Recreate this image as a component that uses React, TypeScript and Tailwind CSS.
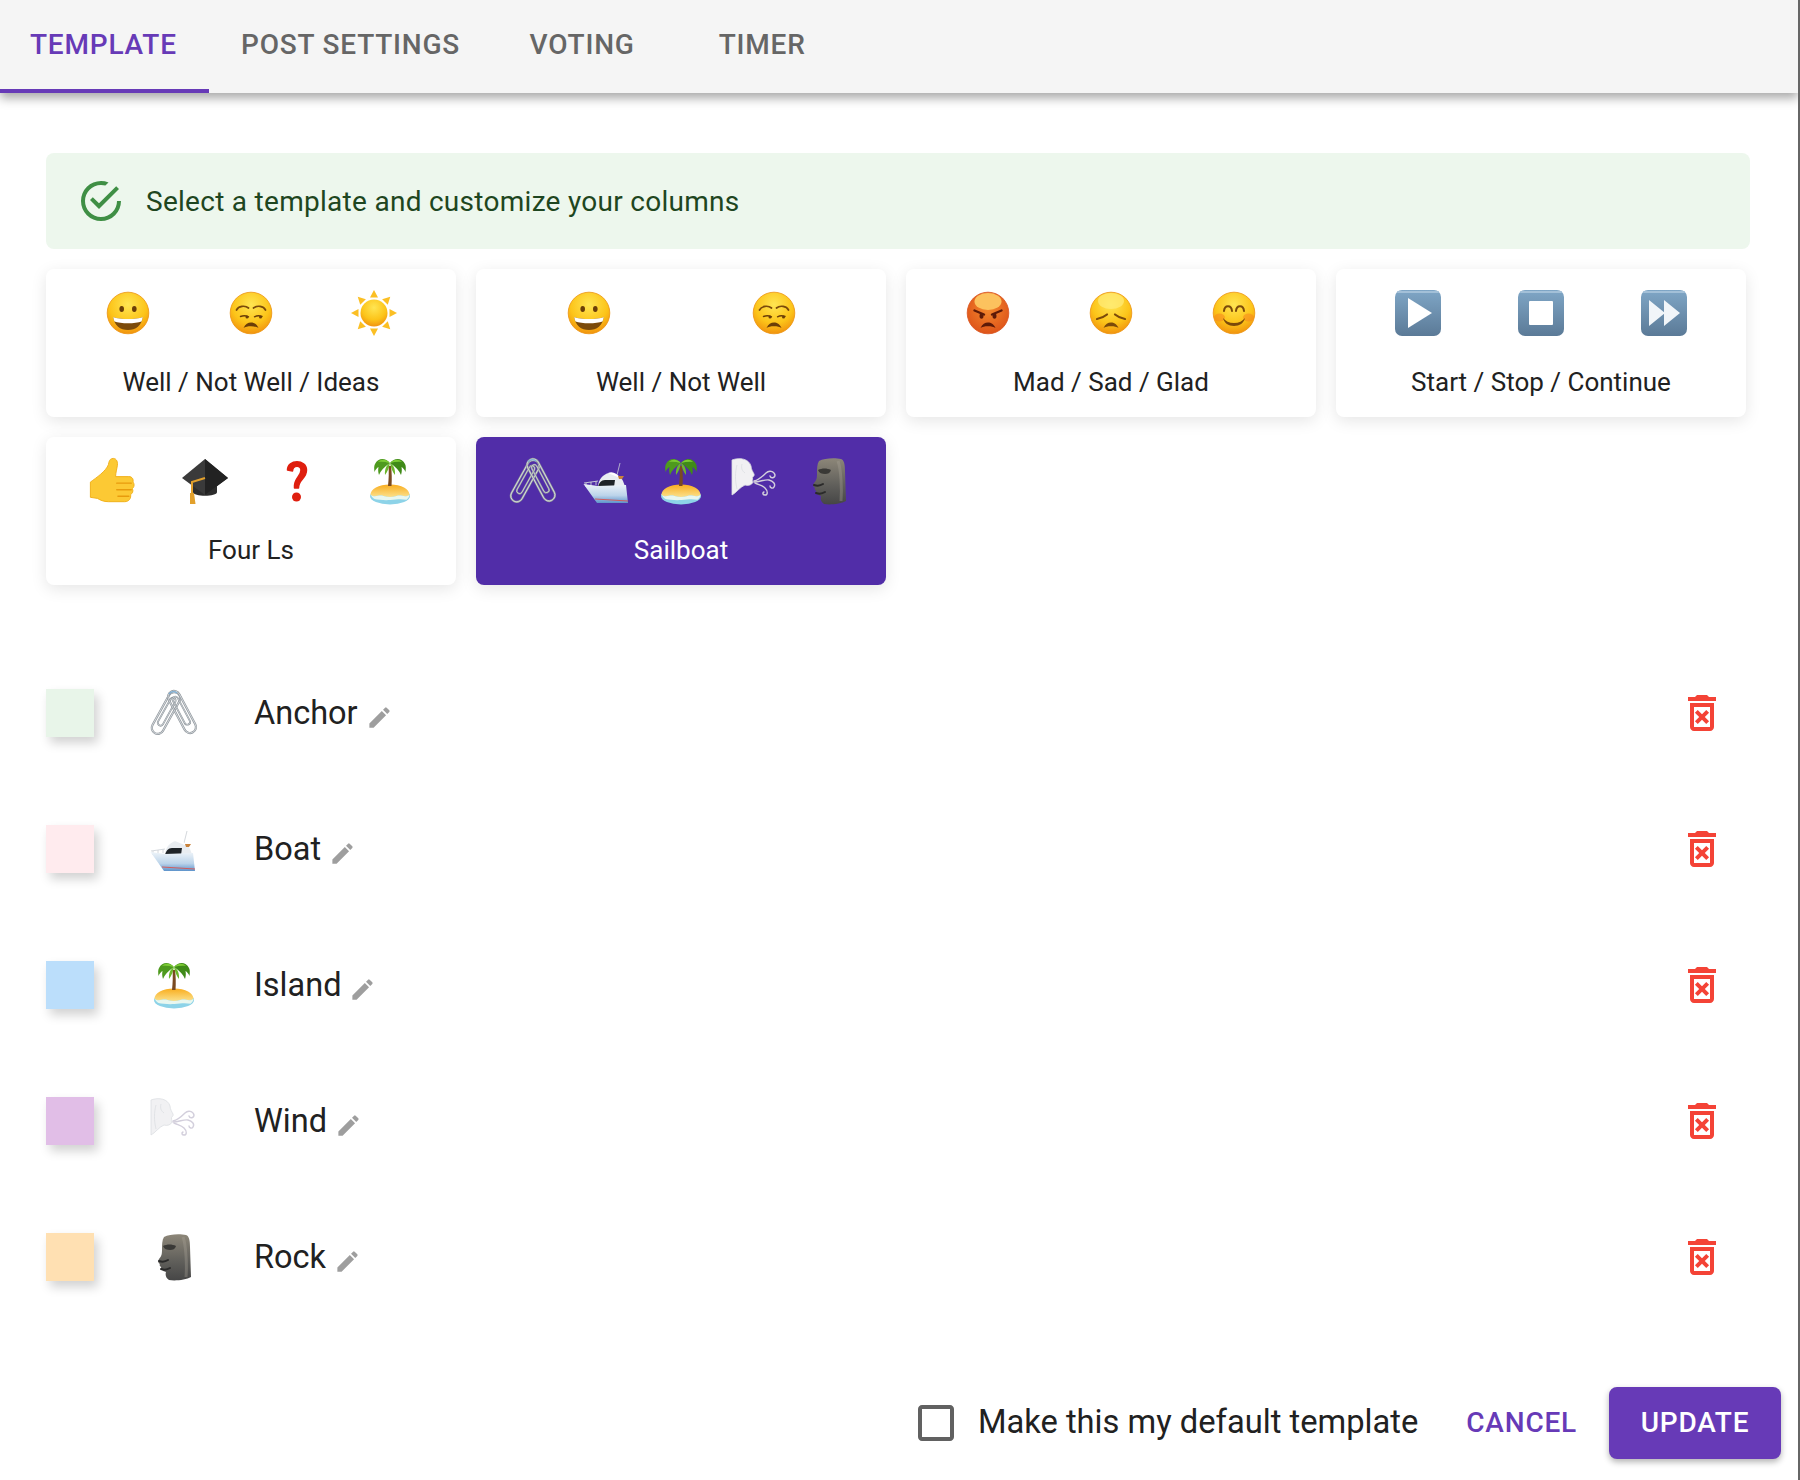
import { ReactNode } from 'react';

type IconProps = { className?: string };

function Svg({ children, className = 'w-12 h-12' }: { children: ReactNode; className?: string }) {
  return (
    <svg viewBox="0 0 48 48" className={`shrink-0 ${className}`}>
      {children}
    </svg>
  );
}

function Defs() {
  return (
    <svg className="block h-0 w-0">
      <defs>
        <radialGradient id="face" cx="50%" cy="30%" r="75%">
          <stop offset="0%" stopColor="#ffe552" />
          <stop offset="60%" stopColor="#fcc419" />
          <stop offset="100%" stopColor="#ef8a0c" />
        </radialGradient>
        <radialGradient id="angry" cx="50%" cy="40%" r="65%">
          <stop offset="0%" stopColor="#f48a2e" />
          <stop offset="100%" stopColor="#dc4f17" />
        </radialGradient>
        <linearGradient id="btn" x1="0" y1="0" x2="0" y2="1">
          <stop offset="0%" stopColor="#7fa6c6" />
          <stop offset="100%" stopColor="#5b7a97" />
        </linearGradient>
        <linearGradient id="sand" x1="0" y1="0" x2="0" y2="1">
          <stop offset="0%" stopColor="#f9ad1e" />
          <stop offset="100%" stopColor="#fbe08a" />
        </linearGradient>
        <linearGradient id="moai" x1="0" y1="0" x2="0" y2="1">
          <stop offset="0%" stopColor="#8d8779" />
          <stop offset="60%" stopColor="#5f5e5a" />
          <stop offset="100%" stopColor="#464646" />
        </linearGradient>
        <linearGradient id="hull" x1="0" y1="0" x2="0" y2="1">
          <stop offset="0%" stopColor="#eef4f9" />
          <stop offset="60%" stopColor="#bcd4ea" />
          <stop offset="100%" stopColor="#5d93cb" />
        </linearGradient>
      </defs>
    </svg>
  );
}

function Face({ children, fill = 'url(#face)', stroke = '#ec930f' }: { children: ReactNode; fill?: string; stroke?: string }) {
  return (
    <>
      <circle cx="24" cy="24" r="20.8" fill={fill} stroke={stroke} strokeWidth="0.8" />
      {children}
    </>
  );
}

function Grin({ className }: IconProps) {
  return (
    <Svg className={className}>
      <Face>
        <ellipse cx="17.700" cy="20" rx="2.300" ry="3" fill="#6b3e08" />
        <ellipse cx="30.300" cy="20" rx="2.300" ry="3" fill="#6b3e08" />
        <path d="M9.300 28c6 2.800 23.400 2.800 29.400 0-.8 8.500-7 13-14.700 13S10.100 36.500 9.300 28z" fill="#7b4a0a" />
        <path d="M9.300 28c6 2.800 23.400 2.800 29.400 0-.2 1.700-.6 3.200-1.200 4.500-6 2.400-21 2.400-27 0-.6-1.300-1-2.800-1.200-4.500z" fill="#fff" />
      </Face>
    </Svg>
  );
}

function Unamused({ className }: IconProps) {
  return (
    <Svg className={className}>
      <Face>
        <path d="M9.500 21c2-4 8.500-5 12-2M26.500 19c3.500-3 10-2 12 2" fill="none" stroke="#7b4a0a" strokeWidth="1.700" strokeLinecap="round" />
        <path d="M13.500 27.500c2.500-1 5.500-1 8 .3M27.500 27.800c2.500-1.300 5-1.300 7.500-.3" fill="none" stroke="#6b3e08" strokeWidth="1.400" strokeLinecap="round" />
        <circle cx="20" cy="28" r="1.500" fill="#6b3e08" />
        <circle cx="33.500" cy="28" r="1.500" fill="#6b3e08" />
        <path d="M16.500 39c1.800-4 4.500-5.500 7.500-5.500s5.700 1.500 7.500 5.500c-3-2.200-12-2.200-15 0z" fill="#6b3e08" />
      </Face>
    </Svg>
  );
}

function Sun({ className }: IconProps) {
  const rays = [0, 45, 90, 135, 180, 225, 270, 315];
  return (
    <Svg className={className}>
      {rays.map((r) => (
        <path key={r} d="M24 1l4 7.500h-8z" fill="#fbbf24" transform={`rotate(${r} 24 24)`} />
      ))}
      <circle cx="24" cy="24" r="13.500" fill="url(#face)" />
    </Svg>
  );
}

function Angry({ className }: IconProps) {
  return (
    <Svg className={className}>
      <Face fill="url(#angry)" stroke="#d9531e">
        <ellipse cx="24" cy="12.500" rx="13.500" ry="8.500" fill="#fcc25e" />
        <path d="M10.500 21.500l9.500 4M37.500 21.500l-9.500 4" stroke="#5d1a08" strokeWidth="2.400" strokeLinecap="round" />
        <ellipse cx="17.500" cy="27" rx="2" ry="2.800" fill="#5d1a08" />
        <ellipse cx="30.500" cy="27" rx="2" ry="2.800" fill="#5d1a08" />
        <path d="M16.500 39c1.800-4 4.500-5.500 7.500-5.500s5.700 1.500 7.500 5.500c-3-2.200-12-2.200-15 0z" fill="#5d1a08" />
      </Face>
    </Svg>
  );
}

function Sad({ className }: IconProps) {
  return (
    <Svg className={className}>
      <Face>
        <ellipse cx="24" cy="12" rx="13" ry="8" fill="#ffec7a" opacity="0.7" />
        <path d="M10 30c3-.5 7-2 10-4.500M38 30c-3-.5-7-2-10-4.500" fill="none" stroke="#7b4a0a" strokeWidth="2.200" strokeLinecap="round" />
        <path d="M16.500 39c1.800-4 4.500-5.500 7.500-5.500s5.700 1.500 7.500 5.500c-3-2.200-12-2.200-15 0z" fill="#7b4a0a" />
      </Face>
    </Svg>
  );
}

function Smile({ className }: IconProps) {
  return (
    <Svg className={className}>
      <Face>
        <ellipse cx="9.500" cy="28.500" rx="5.500" ry="4" fill="#f5851f" opacity="0.55" />
        <ellipse cx="38.500" cy="28.500" rx="5.500" ry="4" fill="#f5851f" opacity="0.55" />
        <path d="M14 22c.5-6.500 7.500-6.500 8 0M26 22c.5-6.500 7.500-6.500 8 0" fill="none" stroke="#7b4a0a" strokeWidth="2" strokeLinecap="round" />
        <path d="M13 29c2.500 3 6 5 11 5s8.500-2 11-5c-1 5-5.500 8-11 8s-10-3-11-8z" fill="#7b4a0a" />
      </Face>
    </Svg>
  );
}

function MediaBox({ children, className }: { children: ReactNode; className?: string }) {
  return (
    <Svg className={className}>
      <rect x="1" y="1" width="46" height="46" rx="7" fill="url(#btn)" />
      <path d="M4 3h40" stroke="#a3c0d8" strokeWidth="2" strokeLinecap="round" />
      {children}
    </Svg>
  );
}

function Play({ className }: IconProps) {
  return (
    <MediaBox className={className}>
      <path d="M14 9l24 15-24 15z" fill="#fff" />
    </MediaBox>
  );
}

function Stop({ className }: IconProps) {
  return (
    <MediaBox className={className}>
      <rect x="12" y="12" width="24" height="24" rx="1" fill="#fff" />
    </MediaBox>
  );
}

function Forward({ className }: IconProps) {
  return (
    <MediaBox className={className}>
      <path d="M9 11l16 13-16 13zM24 11l16 13-16 13z" fill="#f1f5f9" />
    </MediaBox>
  );
}

function Thumb({ className }: IconProps) {
  return (
    <Svg className={className}>
      <g transform="translate(-6 0) scale(1.2 1.09)">
        <path
          d="M25 1.500c3-1 5 2 4.500 6-.4 3.500-1.500 7-1.500 10.500h11c3 0 4 2.500 3.500 5 1.500 2 1 4.500-.5 6 1 2.500 0 4.500-1.500 5.500.5 3-1 6.500-5 6.500H22c-4 0-7-1.500-9-3l-6-1V23c5-4 13-10 15-16 .5-3 1-5 3-5.500z"
          fill="#fcc934"
          stroke="#f0ad14"
          strokeWidth="0.800"
        />
        <path d="M29 24h12M29 30h12M30 36h9" stroke="#e89b0c" strokeWidth="1.300" strokeLinecap="round" />
      </g>
    </Svg>
  );
}

function GradCap({ className }: IconProps) {
  return (
    <Svg className={className}>
      <path d="M12 24v11c0 5 24 5 24 0V24z" fill="#2d2d2d" />
      <path d="M24 2L47 21 24 38 1 21z" fill="#3a3a3a" />
      <path d="M24 2L47 21 24 38z" fill="#222" />
      <path d="M24 21L11 25v12" fill="none" stroke="#e2a02c" strokeWidth="2" />
      <path d="M9 36h4l1.500 11H9z" fill="#e2a02c" />
    </Svg>
  );
}

function Question({ className }: IconProps) {
  return (
    <Svg className={className}>
      <path d="M14.500 13c0-11 19-11 19 0 0 9-8 9-8 18h-4c-1-10 6.500-11 6.500-18 0-5-8-5-8.500 1z" fill="#df1f0f" stroke="#df1f0f" strokeWidth="1.500" strokeLinejoin="round" />
      <circle cx="23.500" cy="40" r="4.500" fill="#df1f0f" />
    </Svg>
  );
}

function Island({ className }: IconProps) {
  return (
    <Svg className={className}>
      <ellipse cx="24" cy="39" rx="20" ry="8.500" fill="#8dd3e8" />
      <path d="M4.500 38c0-6 8-10.500 19.500-10.500S43.500 32 43.500 38c-5 3-8-.5-13 1-4 1.200-9 1.200-13 0-5-1.500-8 2-13-1z" fill="url(#sand)" />
      <path d="M4.500 38c5 3 8-.5 13 1 4 1.200 9 1.200 13 0 5-1.500 8 2 13-1-.4 2-1.400 3.500-3 4.800-6-1.300-10-.3-16 .2-5 .4-12 0-16-1-2-1.200-3.500-2.800-4-5z" fill="#e8f7ef" />
      <path d="M22.500 9c.5 6 .3 13-.5 20h3.500c.5-7 .3-14-.5-20z" fill="#7a4a21" />
      <path d="M24 6C19 0 12 1 9 7c-1 2-1 4-.5 8 1-2.500 2.500-4 4-5-.5 2.500-.5 5 .5 8 1.500-4 5-8 11-12z" fill="#4e9a1e" />
      <path d="M24 6c5-6 12-5 15 1 1 2 1 4 .5 8-1-2.500-2.500-4-4-5 .5 2.500.5 5-.5 8-1.500-4-5-8-11-12z" fill="#3f8a18" />
      <path d="M24 6c-3.500 2-5.500 6-5 12 2.500-3 4-7 5-12zM24 6c3.500 2 5.500 6 5 12-2.500-3-4-7-5-12z" fill="#6cb82c" />
      <path d="M24 6c-4-4-9-4-12-1 4-.5 8 0 12 1zM24 6c4-4 9-4 12-1-4-.5-8 0-12 1z" fill="#7ccb34" />
    </Svg>
  );
}

function Clip({ transform }: { transform: string }) {
  return (
    <g transform={transform} fill="none">
      <rect x="-6" y="-23" width="12" height="46" rx="6" stroke="#8e959b" strokeWidth="2.200" />
      <rect x="-6" y="-23" width="12" height="46" rx="6" stroke="#dde1e4" strokeWidth="0.800" />
      <rect x="-2.800" y="-17" width="5.600" height="31" rx="2.800" stroke="#8e959b" strokeWidth="1.800" />
      <rect x="-2.800" y="-17" width="5.600" height="31" rx="2.800" stroke="#dde1e4" strokeWidth="0.600" />
    </g>
  );
}

function Clips({ className }: IconProps) {
  return (
    <Svg className={className}>
      <Clip transform="translate(16 24) rotate(29)" />
      <Clip transform="translate(32 23) rotate(-28)" />
      <path d="M19 5c2-3 6-3 8-1" fill="none" stroke="#7fb2da" strokeWidth="1.300" />
    </Svg>
  );
}

function Boat({ className }: IconProps) {
  return (
    <Svg className={className}>
      <path d="M37 6L34 18" stroke="#c9ced3" strokeWidth="0.800" />
      <path d="M1 26l14-2M3 26v4M8 25v5M13 24v4" fill="none" stroke="#cfd4d9" strokeWidth="0.900" />
      <path d="M15 30c0-7 5-13 11-14 6-.5 12 4 14 8l3 8z" fill="#e9edf1" />
      <path d="M25 16c4-2 9 0 12 5-4-2-8-3-12-5z" fill="#fff" />
      <path d="M15 30c1-4 3-7 7-7h10l-1 7z" fill="#1f2428" />
      <path d="M35 19h6l-2 3h-3z" fill="#c9823a" />
      <path d="M0.500 27L15 29l28-1 2 18H14z" fill="url(#hull)" />
      <path d="M12 42l33 2" stroke="#d9534f" strokeWidth="0.900" />
    </Svg>
  );
}

function Wind({ className }: IconProps) {
  return (
    <Svg className={className}>
      <path d="M1 3c8-3 17-1 19 6 0 3 2 6 3 8 1 2-2 3-1.500 4 .5 2-1 3 .5 4-1 3-5 4-8 3-5 2-9 8-13 10z" fill="#f1f1f3" stroke="#dcdee2" strokeWidth="0.800" />
      <path d="M6 8c-2 7-2 16 0 24M11 7c-1 4 0 7 3 9" fill="none" stroke="#dcdee2" strokeWidth="0.800" />
      <g fill="none" stroke="#d3cfdc" strokeWidth="1.400" strokeLinecap="round">
        <path d="M23 24c5-1 9-5 12-8 3-3 8-2 9 2 0 3-4 4-5 1" />
        <path d="M23 25c6 0 11-3 15-2 4 1 7 4 5 7-1 2-4 1-4-1" />
        <path d="M24 26c4 2 7 2 10 5 3 3 3 7 0 7-2 0-3-2-1-3" />
      </g>
    </Svg>
  );
}

function Moai({ className }: IconProps) {
  return (
    <Svg className={className}>
      <path d="M14 4c5-3 16-3.500 22-2 3 1 4 5 4 12l1 30c-5 3-16 4-22 3-3-2-4-5-3-8-3-1-5-2-5-5-1-1-2-2-1-3-2-1-2-3-1-5 3-3 3-6 3-10 0-4 0-9 2-12z" fill="url(#moai)" />
      <path d="M13 13c4-2 9-2 13 0-1 3-3 4-6 4s-6-1-7-4z" fill="#3a3936" />
      <path d="M9 28c3 1 6 1 9-1M11 36c3 1 6 1 9-1" fill="none" stroke="#2a2a2a" strokeWidth="2" strokeLinecap="round" />
      <path d="M33 4c3 8 4 28 3 40" fill="none" stroke="#a8a398" strokeWidth="3" opacity="0.35" />
    </Svg>
  );
}

function TrashX() {
  return (
    <svg viewBox="0 0 24 24" className="w-12 h-12 shrink-0 fill-[#f44336]">
      <path d="M14.12 10.47L12 12.59l-2.13-2.12-1.41 1.41L10.59 14l-2.12 2.12 1.410 1.410L12 15.410l2.120 2.120 1.410-1.410L13.410 14l2.120-2.120zM15.500 4l-1-1h-5l-1 1H5v2h14V4zM6 19c0 1.100.9 2 2 2h8c1.100 0 2-.9 2-2V7H6v12zM8 9h8v10H8V9z" />
    </svg>
  );
}

function Pencil() {
  return (
    <svg viewBox="0 0 24 24" className="w-[27px] h-[27px] shrink-0 mt-[8px] fill-[#9e9e9e]">
      <path d="M3 17.250V21h3.750L17.810 9.940l-3.750-3.750L3 17.250zM20.710 7.040c.39-.39.39-1.020 0-1.410l-2.340-2.340a.9959.9959 0 0 0-1.410 0l-1.830 1.830 3.750 3.750 1.830-1.830z" />
    </svg>
  );
}

const templates = [
  { name: 'Well / Not Well / Ideas', icons: [Grin, Unamused, Sun] },
  { name: 'Well / Not Well', icons: [Grin, Unamused] },
  { name: 'Mad / Sad / Glad', icons: [Angry, Sad, Smile] },
  { name: 'Start / Stop / Continue', icons: [Play, Stop, Forward] },
  { name: 'Four Ls', icons: [Thumb, GradCap, Question, Island] },
  { name: 'Sailboat', icons: [Clips, Boat, Island, Wind, Moai], selected: true },
];

const columns = [
  { name: 'Anchor', color: 'bg-[#e8f5e9]', Icon: Clips },
  { name: 'Boat', color: 'bg-[#ffebee]', Icon: Boat },
  { name: 'Island', color: 'bg-[#bbdefb]', Icon: Island },
  { name: 'Wind', color: 'bg-[#e1bee7]', Icon: Wind },
  { name: 'Rock', color: 'bg-[#ffe0b2]', Icon: Moai },
];

export default function App() {
  return (
    <div className="w-[1800px] h-[1480px] bg-white overflow-hidden border-r-2 border-[#666666] font-['Roboto',sans-serif] text-[#212121]">
      <Defs />
      <div className="flex h-[93px] bg-[#f5f5f5] shadow-[0_5px_10px_rgba(0,0,0,0.35)] text-[28px] font-medium tracking-[0.8px] text-[#666666]">
        <div className="flex items-center pt-[1px] px-[30px] min-w-[209px] border-b-4 border-[#673ab7] text-[#673ab7]">TEMPLATE</div>
        <div className="flex items-center justify-center pb-[3px] px-8 min-w-[180px]">POST SETTINGS</div>
        <div className="flex items-center justify-center pb-[3px] px-8 min-w-[180px]">VOTING</div>
        <div className="flex items-center justify-center pb-[3px] px-8 min-w-[180px]">TIMER</div>
      </div>

      <div className="pt-[60px] px-[46px]">
        <div className="flex items-center w-[1704px] h-[96px] rounded-lg bg-[#edf7ed] text-[#1e4620] pl-[31px]">
          <svg viewBox="0 0 24 24" className="w-12 h-12 shrink-0 fill-[#3f8f45]">
            <path d="M20 12a8 8 0 0 1-8 8 8 8 0 0 1-8-8 8 8 0 0 1 8-8c.76 0 1.500.11 2.190.31l1.570-1.570A9.800 9.800 0 0 0 12 2 10 10 0 0 0 2 12a10 10 0 0 0 10 10 10 10 0 0 0 10-10M7.910 10.080L6.500 11.500 11 16 21 6l-1.410-1.420L11 13.170l-3.090-3.090z" />
          </svg>
          <span className="ml-[21px] pt-[1px] text-[28px] tracking-[0.28px]">Select a template and customize your columns</span>
        </div>

        <div className="grid grid-cols-[repeat(4,410px)] gap-x-5 gap-y-5 mt-5">
          {templates.map((t) => (
            <div
              key={t.name}
              className={`h-[148px] rounded-lg pt-5 px-5 shadow-[0_4px_16px_rgba(0,0,0,0.1)] ${t.selected ? 'bg-[#512da8] text-white' : 'bg-white'}`}
            >
              <div className="flex justify-around">
                {t.icons.map((Icon, i) => (
                  <Icon key={i} />
                ))}
              </div>
              <div className="mt-[26px] text-center text-[26px] leading-[38px]">{t.name}</div>
            </div>
          ))}
        </div>

        <div className="mt-[60px]">
          {columns.map(({ name, color, Icon }) => (
            <div key={name} className="flex items-center h-[136px]">
              <div className={`w-12 h-12 ${color} shadow-[4px_6px_10px_rgba(0,0,0,0.18)]`} />
              <div className="ml-14">
                <Icon />
              </div>
              <div className="ml-14 flex items-center gap-[8px] flex-1">
                <span className="text-[32.5px]">{name}</span>
                <Pencil />
              </div>
              <div className="mr-[26px]">
                <TrashX />
              </div>
            </div>
          ))}
        </div>
      </div>

      <div className="flex items-center justify-end mt-[62px] pr-[17px]">
        <svg viewBox="0 0 24 24" className="w-[48px] h-[48px] shrink-0 fill-[#616161]">
          <path d="M19 5v14H5V5h14m0-2H5c-1.100 0-2 .9-2 2v14c0 1.100.9 2 2 2h14c1.100 0 2-.9 2-2V5c0-1.100-.9-2-2-2z" />
        </svg>
        <span className="ml-[18px] text-[32.7px]">Make this my default template</span>
        <span className="ml-[48px] text-[28px] font-medium tracking-[0.8px] text-[#673ab7]">CANCEL</span>
        <div className="ml-8 flex items-center justify-center w-[172px] h-[72px] rounded-lg bg-[#673ab7] text-white text-[28px] font-medium tracking-[0.8px] shadow-[0_3px_6px_rgba(0,0,0,0.3)]">
          UPDATE
        </div>
      </div>
    </div>
  );
}
